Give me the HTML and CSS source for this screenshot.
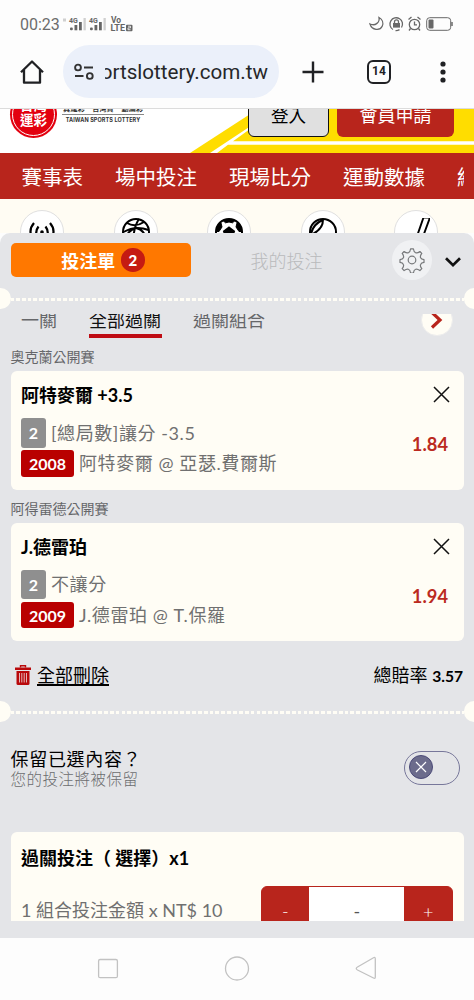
FILE: index.html
```html
<!DOCTYPE html>
<html lang="zh-Hant">
<head>
<meta charset="utf-8">
<title>台灣運彩</title>
<link rel="stylesheet" href="styles.css">
</head>
<body>
<div class="phone">
  <div class="status">
    <span class="clock">00:23</span>
    <svg class="signals" width="72" height="20" viewBox="0 0 72 20">
      <g fill="#666"><rect x="8" y="13.500" width="2.800" height="2.800" rx="1"/><rect x="12.500" y="11" width="2.800" height="5.300"/><rect x="17" y="8" width="2.800" height="8.300"/><rect x="28" y="13.500" width="2.800" height="2.800" rx="1"/><rect x="32.500" y="11" width="2.800" height="5.300"/><rect x="37" y="8" width="2.800" height="8.300"/></g>
      <g fill="#d0d0d0"><rect x="21.500" y="4" width="2.300" height="12.300"/><rect x="41.500" y="4" width="2.300" height="12.300"/><rect x="1" y="4.500" width="3" height="3"/></g>
      <g class="sigtext"><text x="7" y="8.500" font-size="7">4G</text><text x="27" y="8.500" font-size="7">4G</text><text x="49" y="8.500" font-size="8.500">Vo</text><text x="48.500" y="17" font-size="9">LTE</text></g>
      <rect x="64" y="10.700" width="6.500" height="6.500" rx="1" fill="#666"/><path d="M66 12.200h2.500v1.700h-2.500v1.800h2.500" stroke="#fff" stroke-width=".8" fill="none"/>
    </svg>
    <svg class="sysicons" width="86" height="20" viewBox="0 0 86 20" fill="none" stroke="#686868" stroke-width="1.300">
      <path d="M11 3.500c1 4.500-3.500 9-9 6.500c2 6.500 10 7 12.200 2.300c1.600-3.500 0-7-3.200-8.800z"/>
      <path d="M25 15.500a6.300 6.300 0 1 1 8.500-2M31.500 15.600a6.300 6.300 0 0 1-4 1"/><rect x="25" y="9" width="7" height="4.600" fill="#686868" stroke="none"/><path d="M26.500 9V7.800a2 2 0 0 1 4 0V9"/>
      <circle cx="46.500" cy="10.500" r="5.200"/><path d="M46.500 7.500v3.300h2.500M40.500 5.500l3-2.500M52.500 5.500l-3-2.500M42.500 14.500l-1.500 2M50.500 14.500l1.500 2"/>
      <rect x="58.700" y="3.700" width="24" height="12.600" rx="3" stroke-width="1"/><rect x="60.500" y="5.500" width="5" height="9" rx="1" fill="#686868" stroke="none"/><path d="M84 8v4" stroke-width="1.500"/>
    </svg>
  </div>

  <div class="browser">
    <svg class="home" width="24" height="26" viewBox="0 0 24 26" fill="none" stroke="#202124" stroke-width="2.300"><path d="M1 13.200L12 2.500l11 10.700M4 11v12.700h16V11" stroke-linejoin="round"/></svg>
    <div class="omnibox">
      <svg width="20" height="18" viewBox="0 0 20 18" fill="none" stroke="#333" stroke-width="1.900"><circle cx="4" cy="4.500" r="2.900"/><path d="M10 4.500h9M1 13h8.500"/><circle cx="15.800" cy="13" r="2.900"/></svg>
      <div class="url"><span>ortslottery.com.tw</span></div>
    </div>
    <svg class="plus" width="22" height="22" viewBox="0 0 22 22" stroke="#202124" stroke-width="2.400"><path d="M11 .500v21M.500 11h21"/></svg>
    <div class="tabs-count">14</div>
    <svg class="dots" width="6" height="22" viewBox="0 0 6 22" fill="#202124"><circle cx="3" cy="3" r="2.600"/><circle cx="3" cy="11" r="2.600"/><circle cx="3" cy="19" r="2.600"/></svg>
  </div>

  <header class="site">
    <svg class="stripes" width="474" height="44" viewBox="0 0 474 44">
      <path d="M190 44L258 0H474V44z" fill="#ffdd00"/>
      <path d="M210 44L250 17.500V20L233 32.300H474V35.700H228L217 44z" fill="#fff"/>
    </svg>
    <div class="seal"><div class="ring"><span>台灣</span><span>運彩</span></div></div>
    <div class="brand"><div class="slogan"><span>真運彩</span><span>台灣買</span><span>動滿彩</span></div><div class="english">TAIWAN SPORTS LOTTERY</div></div>
    <div class="login">登入</div>
    <div class="join">會員申請</div>
  </header>

  <nav class="nav"><div class="navlist"><span>賽事表</span><span>場中投注</span><span>現場比分</span><span>運動數據</span><span>結果</span></div></nav>

  <div class="sports">
    <div class="sport"><svg width="28" height="28" viewBox="0 0 28 28" fill="none" stroke="#000" stroke-width="2.200"><path d="M6 5q-7 8 0 18M10.500 8.500q-4.500 6 0 12M17.500 8.500q4.500 6 0 12M22 5q7 8 0 18"/><circle cx="14" cy="14" r="1.800" fill="#000" stroke="none"/></svg></div>
    <div class="sport"><svg width="28" height="28" viewBox="0 0 28 28" fill="none" stroke="#000" stroke-width="2"><circle cx="14" cy="14" r="13"/><path d="M5 5q8 5 17-1M1.500 14q12-7 25-2M17 1q-6 9-6 26M4 23q0-10 10-13q9 2 10 12"/></svg></div>
    <div class="sport"><svg width="28" height="28" viewBox="0 0 28 28" fill="none" stroke="#000" stroke-width="2"><circle cx="14" cy="14" r="13"/><path d="M14 9.500l5 3.800-2 6.200h-6l-2-6.200z" fill="#000"/><path d="M8 2.500q6-2 12 0l-2.500 2.300L14 4l-3.500.8zM2 9l4-4 1 4-3 4.500H1zM26 9l-4-4-1 4 3 4.500h3z" fill="#000" stroke-width="1"/></svg></div>
    <div class="sport"><svg width="28" height="28" viewBox="0 0 28 28" fill="none" stroke="#000" stroke-width="2"><circle cx="14" cy="14" r="13"/><path d="M14 1.500Q14 12 1.500 17M13.500 2Q3 7 2 17"/></svg></div>
    <div class="sport"><svg width="28" height="28" viewBox="0 0 28 28" fill="none" stroke="#000" stroke-width="1.900"><path d="M21.500-.5h6.500L19 24h-6z"/></svg></div>
  </div>

  <main class="sheet">
    <div class="sheethead">
      <div class="slip">投注單<b>2</b></div>
      <div class="mine">我的投注</div>
      <div class="gear"><svg width="26" height="26" viewBox="0 0 26 26" fill="none" stroke="#77797b" stroke-width="1.200"><circle cx="13" cy="13" r="3.800"/><path stroke-linejoin="round" d="M11.600 1.800h2.800q.3 3.200 2.200 3.900q1.600.8 4.300-1.200l1.900 1.900q-2 2.600-1.200 4.300q.7 1.600 3.400 2v2.700q-2.700.3-3.400 2q-.8 1.700 1.200 4.300l-1.900 1.900q-2.700-2-4.300-1.300q-1.900.7-2.200 3.900h-2.800q-.3-3.200-2.200-3.900q-1.600-.7-4.300 1.300l-1.900-1.900q2-2.600 1.200-4.300q-.7-1.700-3.400-2v-2.700q2.700-.4 3.400-2q.8-1.700-1.200-4.300l1.900-1.900q2.700 2 4.300 1.200q1.900-.7 2.200-3.900z"/></svg></div>
      <svg class="chev" width="18" height="12" viewBox="0 0 18 12" fill="none" stroke="#111" stroke-width="2.700"><path d="M2 2.200l7 7 7-7"/></svg>
    </div>
    <div class="perf"><i></i><span></span><i></i></div>
    <div class="subtabs">
      <span>一關</span><span class="on">全部過關</span><span>過關組合</span>
      <div class="next"><svg width="14" height="18" viewBox="0 0 14 18" fill="none" stroke="#b8241b" stroke-width="3.200"><path d="M2 1.500l8 7.500-8 7.500"/></svg></div>
    </div>

    <div class="event">奧克蘭公開賽</div>
    <section class="bet">
      <div class="betmain">
        <h3>阿特麥爾 +3.5</h3>
        <div class="line"><b class="num">2</b><span>[總局數]讓分 -3.5</span></div>
        <div class="line"><b class="code">2008</b><span>阿特麥爾 @ 亞瑟.費爾斯</span></div>
      </div>
      <div class="betside"><svg width="17" height="17" viewBox="0 0 17 17" stroke="#111" stroke-width="1.500"><path d="M1 1l15 15M16 1L1 16"/></svg><b>1.84</b></div>
    </section>
    <div class="event second">阿得雷德公開賽</div>
    <section class="bet">
      <div class="betmain">
        <h3>J.德雷珀</h3>
        <div class="line"><b class="num">2</b><span>不讓分</span></div>
        <div class="line"><b class="code">2009</b><span>J.德雷珀 @ T.保羅</span></div>
      </div>
      <div class="betside"><svg width="17" height="17" viewBox="0 0 17 17" stroke="#111" stroke-width="1.500"><path d="M1 1l15 15M16 1L1 16"/></svg><b>1.94</b></div>
    </section>

    <div class="summary">
      <svg width="16" height="20" viewBox="0 0 16 20"><path d="M0 2.500h16v2.500H0z" fill="#b9090b"/><path d="M5.500 2.500V.800h5v1.700" fill="none" stroke="#b9090b" stroke-width="1.400"/><path d="M1.500 6h13v12.500q0 1.500-1.500 1.500H3q-1.500 0-1.500-1.500z" fill="#b9090b"/><path d="M4.500 8v9.500M6.800 8v9.500M9.200 8v9.500M11.500 8v9.500" stroke="#e8c9ca" stroke-width=".9"/></svg>
      <u>全部刪除</u>
      <div class="total">總賠率 <b>3.57</b></div>
    </div>
    <div class="perf"><i></i><span></span><i></i></div>

    <div class="keep">
      <div><div class="q">保留已選內容？</div><div class="sub">您的投注將被保留</div></div>
      <div class="toggle"><div class="knob"><svg width="12" height="12" viewBox="0 0 12 12" stroke="#fff" stroke-width="1.200"><path d="M1 1l10 10M11 1L1 11"/></svg></div></div>
    </div>

    <section class="stake">
      <h3>過關投注（ 選擇）x1</h3>
      <div class="stakerow"><span>1 組合投注金額 x NT$ 10</span>
        <div class="stepper"><div>-</div><div class="value">-</div><div>+</div></div>
      </div>
    </section>
  </main>

  <footer class="android">
    <svg width="474" height="62" viewBox="0 0 474 62" fill="none" stroke="#c2c2c2" stroke-width="1.300"><rect x="98.600" y="21.500" width="18.800" height="18.200" rx="1.500"/><circle cx="237" cy="30.500" r="11.500"/><path d="M375.300 21.500v17.500q0 2-1.800 1L357.500 32q-2.500-1.500 0-3L373.500 19.700q1.800-1 1.800 1z"/></svg>
  </footer>
</div>
</body>
</html>
```

FILE: styles.css
```css
* { box-sizing: border-box; }
body { margin: 0; background: #fdfdfd; }
svg { display: block; flex: none; }
h3 { margin: 0; }
.phone {
  width: 474px; height: 1000px; overflow: hidden;
  display: flex; flex-direction: column;
  font-family: Lato, "Noto Sans CJK TC", sans-serif;
  white-space: nowrap; color: #000;
}
.phone > * { flex: none; }

.status { height: 44px; padding: 14px 20px 0 20px; display: flex; }
.clock { font: 16px/22px Roboto, sans-serif; color: #6c6c6c; width: 42px; }
.sigtext { font-family: Roboto, sans-serif; font-weight: 700; fill: #666; }
.sysicons { margin-left: auto; }

.browser { height: 65px; display: flex; align-items: center; padding: 0 0 9px 20px; border-bottom: 1px solid #dcdcdc; }
.omnibox { margin-left: 19px; width: 216px; height: 53px; border-radius: 27px; background: #ebf0fa; display: flex; align-items: center; padding-left: 11px; }
.url { margin-left: 11px; width: 163px; height: 30px; overflow: hidden; display: flex; justify-content: flex-end; font: 20.6px/31px Roboto, sans-serif; color: #262729; }
.plus { margin-left: 23px; }
.tabs-count { margin-left: 43px; width: 24px; height: 24px; border: 2.4px solid #202124; border-radius: 6px; font: 700 12px/19px Roboto, sans-serif; text-align: center; color: #202124; }
.dots { margin-left: 49px; }

.site { height: 44px; overflow: hidden; background: #fff; position: relative; display: flex; align-items: flex-start; padding-left: 10px; }
.stripes { position: absolute; left: 0; top: 0; }
.site > div { position: relative; }
.seal { width: 47px; height: 47px; margin-top: -18px; border-radius: 50%; background: #e3000f; padding: 2px; }
.ring { width: 43px; height: 43px; border: 1px solid #fff; border-radius: 50%; color: #fff; font-size: 13.5px; font-weight: 700; line-height: 14.5px; text-align: center; padding-top: 4px; display: flex; flex-direction: column; }
.brand { margin-left: 5px; width: 82px; margin-top: -7px; text-align: center; color: #333; }
.slogan { font-size: 7.2px; line-height: 14px; height: 13px; padding: 0 1px; border-bottom: 1px solid #888; display: flex; justify-content: space-between; font-weight: 700; }
.english { font: 700 5.5px/11px Inter, sans-serif; letter-spacing: .1px; }
.login { margin-left: 104px; width: 81px; height: 48px; margin-top: -20px; border: 1.500px solid #111; border-radius: 6px; background: #e0e0e0; font-size: 17.5px; line-height: 52px; text-align: center; }
.join { margin-left: 8px; width: 117px; height: 48px; margin-top: -20px; border-radius: 6px; background: #b8251c; color: #fff; font-size: 18px; line-height: 53px; text-align: center; }

.nav { height: 46px; background: #b8251c; padding: 0 10.500px 0 21.500px; }
.navlist { display: flex; gap: 32px; overflow: hidden; height: 46px; color: #fff; font-size: 20.5px; line-height: 48px; }

.sports { height: 34px; overflow: hidden; background: #fffcf3; display: flex; padding: 11px 0 0 20px; gap: 49.500px; }
.sport { flex: none; width: 44px; height: 44px; border-radius: 50%; background: #fff; border: 1px solid #e0e0e0; display: flex; align-items: center; justify-content: center; }

.sheet { height: 705px; background: #e4e5e8; border-radius: 10px 10px 0 0; display: flex; flex-direction: column; padding-bottom: 17.500px; overflow: hidden; }
.sheet > * { flex: none; }
.sheethead { height: 55px; padding: 0 12px 1px 10.500px; display: flex; align-items: center; }
.slip { width: 181.500px; height: 34px; border-radius: 5px; background: #ff7800; color: #fff; font-size: 18px; font-weight: 700; display: flex; align-items: center; justify-content: center; gap: 6px; padding-left: 4px; }
.slip b { width: 23.500px; height: 23.500px; border-radius: 50%; background: #c51b12; font-size: 15px; line-height: 24px; text-align: center; }
.mine { margin-left: 59px; width: 73px; color: #b9babc; font-size: 18px; font-weight: 300; }
.gear { margin-left: 69px; width: 39.500px; height: 39.500px; border-radius: 50%; background: #f0f1f3; display: flex; align-items: center; justify-content: center; }
.chev { margin-left: 12.500px; margin-top: 3px; }

.perf { height: 21px; display: flex; align-items: center; }
.perf i { width: 10.500px; height: 21px; background: #fffdf5; border-radius: 0 10.500px 10.500px 0; }
.perf i:last-child { border-radius: 10.500px 0 0 10.500px; }
.perf span { flex: 1; height: 3px; margin-top: 2px; background: repeating-linear-gradient(90deg, #fffdf5 0 3.800px, #e4e5e8 3.800px 5.870px); background-position-x: -1px; }

.subtabs { margin-top: 5px; height: 28px; overflow: hidden; display: flex; padding-left: 21px; font-size: 18px; line-height: 12px; color: #66676a; }
.subtabs span { height: 24px; }
.subtabs .on { margin: 0 31.500px 0 31.500px; border-bottom: 4px solid #bf0c14; color: #111; padding: 0 .500px; }
.next { margin-left: auto; margin-right: 21.500px; width: 31.500px; height: 31.500px; margin-top: -10px; border-radius: 50%; background: #fffdf5; border: 1px solid #ececec; display: flex; align-items: center; justify-content: center; }

.event { height: 29px; padding: 5px 0 0 10.500px; font-size: 14px; line-height: 20px; color: #66676a; }
.event.second { height: 33px; padding-top: 9px; }
.bet { margin: 0 10.500px; height: 118.500px; border-radius: 6px; background: #fffdf5; padding: 12px 14px 0 10.500px; display: flex; justify-content: space-between; }
.bet h3, .stake h3 { font-size: 18px; line-height: 24px; font-weight: 700; }
.betmain h3 { margin-bottom: 11px; }
.line { height: 29.500px; display: flex; align-items: center; font-size: 18px; line-height: 28px; color: #707070; letter-spacing: .58px; margin-bottom: 1px; }
.line b { color: #fff; font-size: 16px; text-align: center; border-radius: 3px; letter-spacing: 0; margin-right: 5px; }
.num { width: 25px; height: 29.500px; line-height: 30px; background: #8f8f8f; }
.code { width: 53px; height: 26.500px; line-height: 27px; background: #b90000; }
.betside { display: flex; flex-direction: column; align-items: flex-end; padding-top: 3px; }
.betside b { color: #bb2a20; font-size: 18.3px; line-height: 24px; margin: 29px 1.500px 0 0; }

.summary { height: 59.500px; display: flex; align-items: center; padding: 9px 11px 0 15px; font-size: 18px; line-height: 24px; }
.summary u { margin-left: 6px; text-underline-offset: 2px; text-decoration-thickness: 1.500px; }
.total { margin-left: auto; margin-top: 1px; font-size: 18px; }
.total b { font-size: 15.6px; }

.keep { height: 110.500px; padding: 26px 14.500px 0 10.500px; display: flex; justify-content: space-between; }
.q { font-size: 18px; line-height: 22px; letter-spacing: .7px; }
.sub { font-size: 15.5px; line-height: 19px; letter-spacing: .5px; color: #6c6d6f; font-weight: 300; }
.toggle { width: 55.500px; height: 34px; margin-top: 3px; border: 1.500px solid #77779a; border-radius: 17px; padding: 3.500px; }
.knob { width: 24px; height: 24px; border-radius: 50%; background: #6c6c8c; border: 1.500px solid #4b4a78; display: flex; align-items: center; justify-content: center; }

.stake { margin: 0 10.500px; height: 89px; overflow: hidden; border-radius: 6px 6px 0 0; background: #fffdf5; padding: 14px 10.500px 0 10.500px; }
.stakerow { margin-top: 16px; display: flex; justify-content: space-between; font-size: 18px; line-height: 49px; color: #707070; }
.stepper { width: 192.500px; height: 50px; border: 1.500px solid #b8251c; border-radius: 6px; background: #b8251c; color: #fff; font-weight: 300; display: grid; grid-template-columns: 1fr 95px 1fr; text-align: center; }
.value { background: #fff; color: #555; font-weight: 400; }

.android { height: 62px; background: #fdfdfd; }
```
